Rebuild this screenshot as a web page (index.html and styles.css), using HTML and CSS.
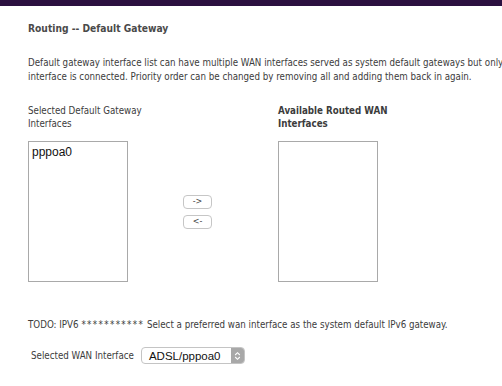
FILE: index.html
```html
<!DOCTYPE html>
<html lang="en">
<head>
    <meta charset="UTF-8">
    <title>Routing -- Default Gateway</title>
    <link rel="stylesheet" href="styles.css">
</head>
<body>
    <div class="top-band"></div>

    <div class="content">
        <h1>Routing -- Default Gateway</h1>

        <p class="intro">Default gateway interface list can have multiple WAN interfaces served as system default gateways but only<br>
        interface is connected. Priority order can be changed by removing all and adding them back in again.</p>

        <div class="lists">
            <div class="list-label">Selected Default Gateway<br>Interfaces</div>
            <div></div>
            <div class="list-label bold">Available Routed WAN<br>Interfaces</div>

            <div class="listbox">
                <div class="option">pppoa0</div>
            </div>
            <div class="move-buttons">
                <button>-&gt;</button>
                <button>&lt;-</button>
            </div>
            <div class="listbox"></div>
        </div>

        <p class="todo">TODO: IPV6 <span class="stars">***********</span> Select a preferred wan interface as the system default IPv6 gateway.</p>

        <div class="wan-row">
            <span class="wan-label">Selected WAN Interface</span>
            <div class="select-box">
                <span class="select-value">ADSL/pppoa0</span>
                <span class="stepper">
                    <svg width="7" height="10" viewBox="0 0 7 10">
                        <path d="M1.2 4 L3.5 1.7 L5.8 4 M1.2 6 L3.5 8.3 L5.8 6" fill="none" stroke="#fff" stroke-width="1.1"/>
                    </svg>
                </span>
            </div>
        </div>
    </div>
</body>
</html>
```

FILE: styles.css
```css
body {
    margin: 0;
    overflow: hidden;
    background-color: #fff;
    font-family: "DejaVu Sans Condensed", "DejaVu Sans", sans-serif;
    font-size: 9.7px;
    color: #3c3c3c;
}
.top-band {
    height: 6px;
    background-color: #2b1040;
}
.content {
    padding-left: 28px;
}
h1 {
    margin: 16px 0 0 0;
    font-size: 10.2px;
    line-height: 14px;
    color: #4a4a4a;
}
.intro {
    margin: 20px 0 0 0;
    line-height: 14px;
    white-space: nowrap;
}
.lists {
    display: grid;
    grid-template-columns: 155px 95px 100px;
    margin-top: 20px;
}
.list-label {
    line-height: 13px;
    white-space: nowrap;
}
.bold {
    font-weight: bold;
}
.listbox {
    margin-top: 11px;
    width: 98px;
    height: 139px;
    border: 1px solid #a9a9a9;
}
.option {
    padding: 3px 0 0 3px;
    font-family: "Liberation Sans", Arial, sans-serif;
    font-size: 12px;
    color: #111;
}
.move-buttons {
    display: flex;
    flex-direction: column;
    gap: 6px;
    align-self: center;
    margin-top: 11px;
}
.move-buttons button {
    width: 29px;
    height: 14px;
    padding: 0;
    font-family: "DejaVu Sans", sans-serif;
    font-size: 8px;
    color: #444;
    background-color: #fff;
    border: 1px solid #c6c6c6;
    border-radius: 4px;
}
.todo {
    margin: 36px 0 0 0;
    line-height: 14px;
}
.stars {
    letter-spacing: 1.35px;
}
.wan-row {
    display: flex;
    align-items: center;
    gap: 7px;
    margin-top: 15px;
    padding-left: 3px;
}
.select-box {
    display: flex;
    align-items: center;
    justify-content: space-between;
    width: 95px;
    height: 15px;
    padding-left: 7px;
    border: 1px solid #c4c4c4;
    border-radius: 4px;
    background-color: #fff;
}
.select-value {
    font-family: "Liberation Sans", Arial, sans-serif;
    font-size: 11.5px;
    color: #111;
}
.stepper {
    display: flex;
    align-items: center;
    justify-content: center;
    width: 13px;
    height: 15px;
    background-color: #a8a8a8;
    border-radius: 0 3px 3px 0;
}
```
